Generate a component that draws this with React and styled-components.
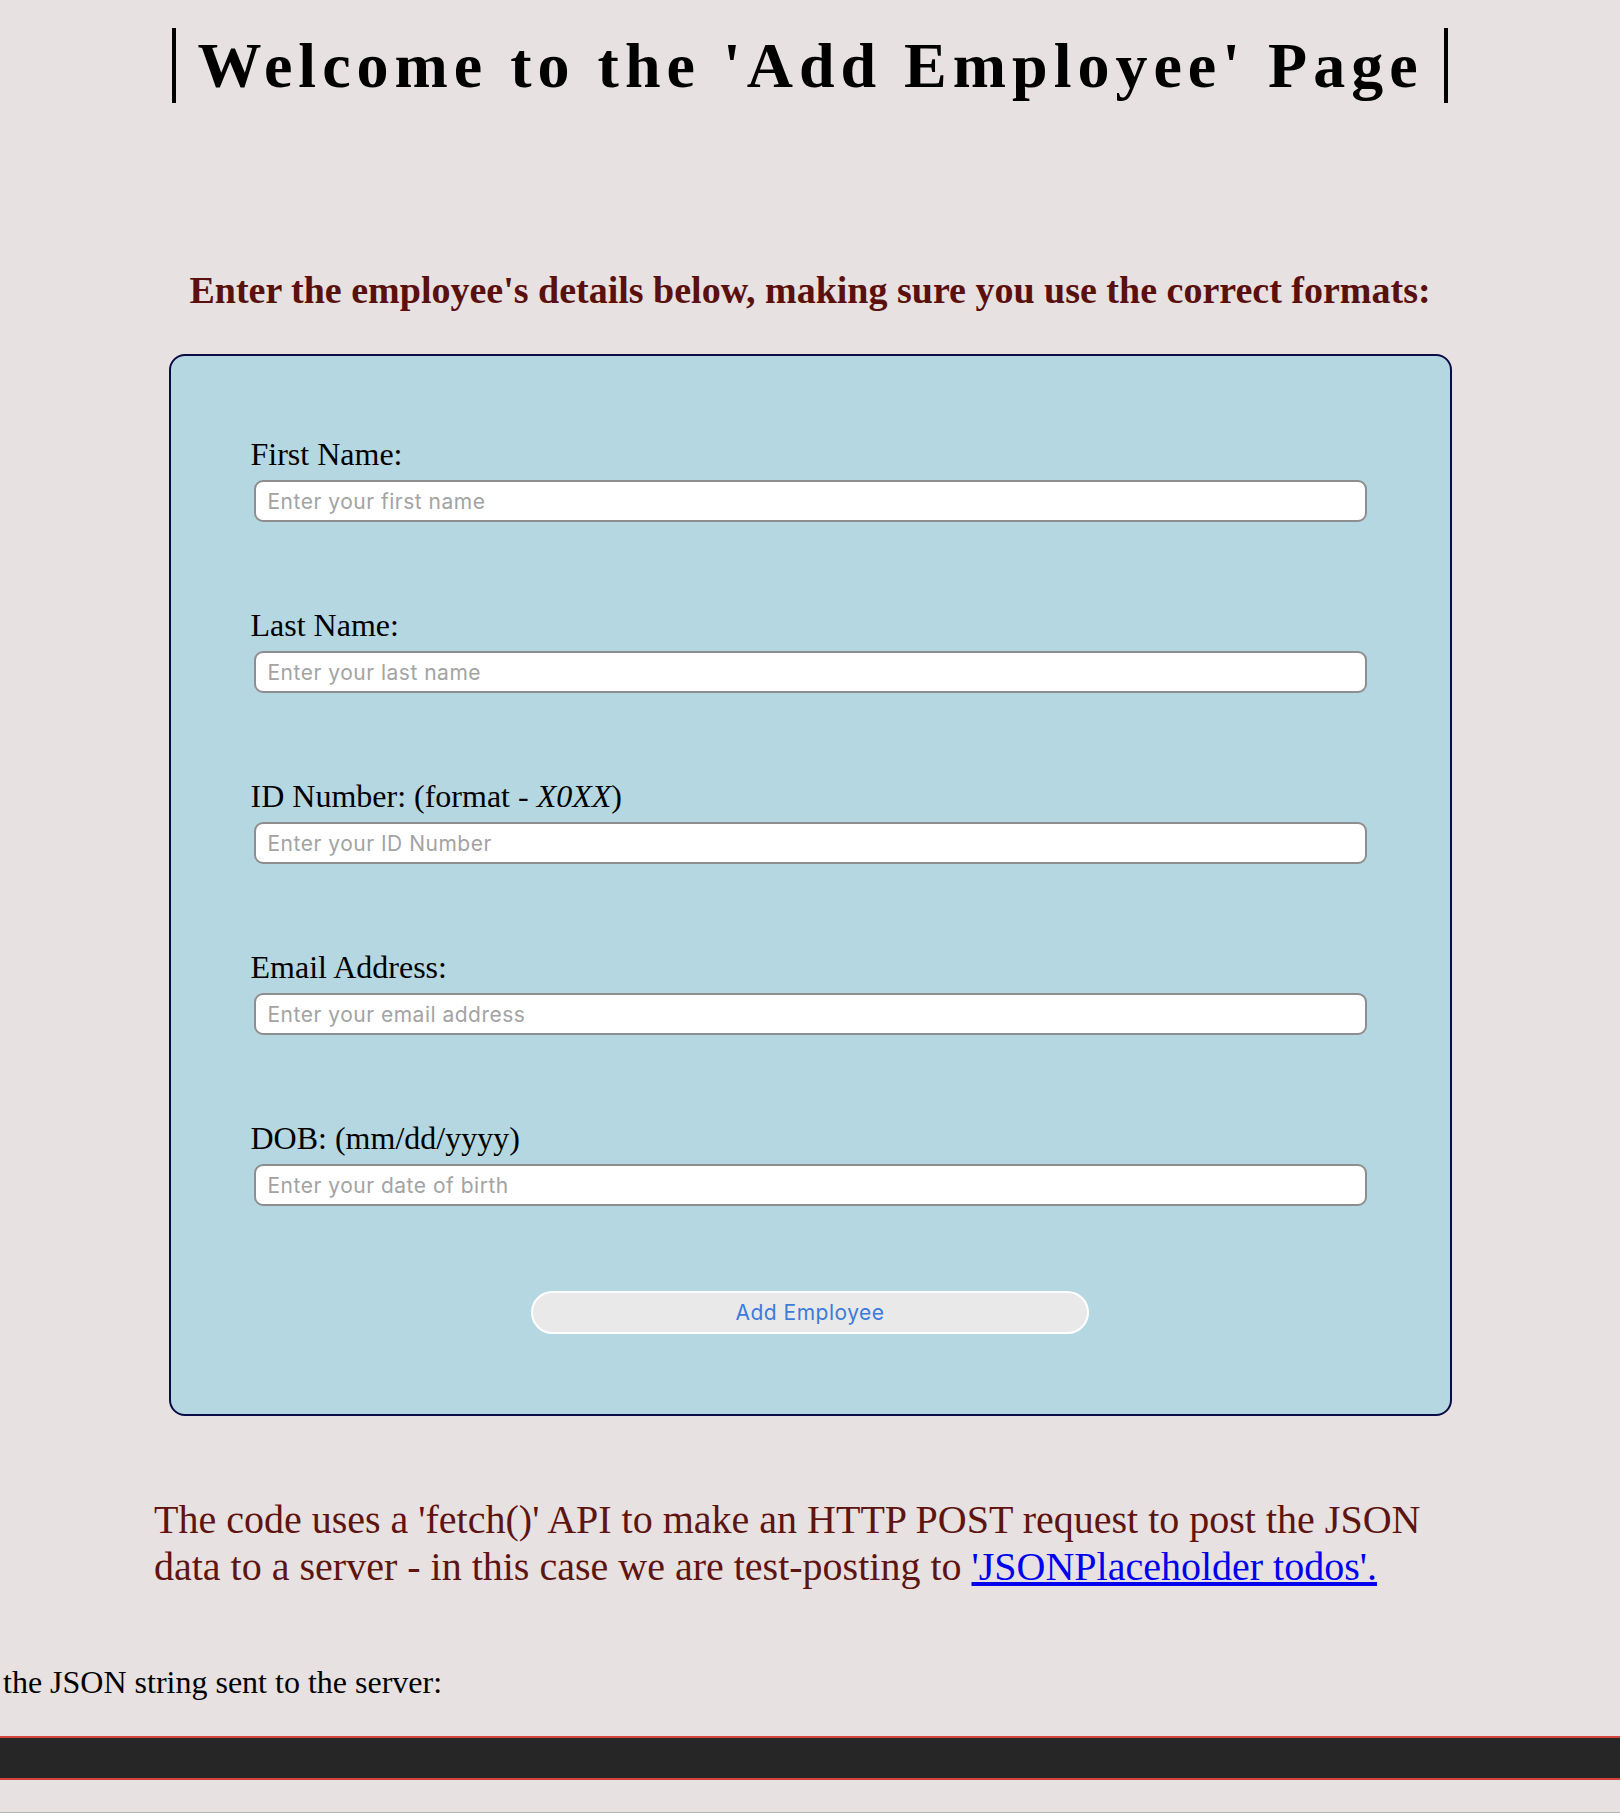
import React from "react";
import styled, { createGlobalStyle } from "styled-components";

const GlobalStyle = createGlobalStyle`
  html, body {
    margin: 0;
    padding: 0;
    background: #e7e1e1;
  }
  body {
    font-family: "Liberation Serif", "Times New Roman", serif;
  }
`;

const Page = styled.div`
  min-height: 1812px;
  border-bottom: 1px solid #b3b3b3;
  display: flex;
  flex-direction: column;
`;

const TitleRow = styled.header`
  display: flex;
  justify-content: center;
  padding-top: 28px;
`;

const Title = styled.h1`
  margin: 0;
  padding: 0 20px 0 21px;
  border-left: 4px solid #000;
  border-right: 4px solid #000;
  font-size: 64px;
  line-height: 75px;
  font-weight: 700;
  letter-spacing: 6px;
  color: #000;
`;

const Intro = styled.h2`
  margin: 166px 0 0;
  text-align: center;
  font-size: 38px;
  line-height: 42px;
  font-weight: 700;
  color: #5a100d;
`;

const FormCard = styled.form`
  box-sizing: border-box;
  width: 1283px;
  margin: 43px auto 0;
  padding: 80px;
  background: #b5d7e2;
  border: 2px solid #0b0b45;
  border-radius: 16px;
  display: flex;
  flex-direction: column;
  gap: 85px;
`;

const Field = styled.div`
  display: flex;
  flex-direction: column;
  gap: 8px;
`;

const Label = styled.label`
  font-size: 32px;
  line-height: 36px;
  color: #000;

  em {
    font-style: italic;
  }
`;

const Input = styled.input`
  box-sizing: border-box;
  height: 42px;
  margin: 0 3px;
  padding: 0 12px;
  background: #fff;
  border: 2px solid #8e8e8e;
  border-radius: 9px;
  font-family: Inter, "Noto Sans", sans-serif;
  font-size: 21px;
  letter-spacing: 0.5px;
  color: #222;
  outline: none;

  &::placeholder {
    color: #a3a3a3;
  }
`;

const SubmitButton = styled.button`
  align-self: center;
  width: 558px;
  height: 43px;
  background: #e9e9e9;
  border: 2px solid #fff;
  border-radius: 22px;
  font-family: Inter, "Noto Sans", sans-serif;
  font-size: 21px;
  letter-spacing: 0.5px;
  color: #3c7bdb;
  cursor: pointer;
`;

const Note = styled.p`
  width: 1312px;
  margin: 80px auto 0;
  font-size: 40px;
  line-height: 47px;
  color: #5e1410;

  a {
    color: #0000ee;
    text-decoration: underline;
  }
`;

const JsonLabel = styled.p`
  margin: 74px 0 0;
  padding-left: 3px;
  font-size: 32px;
  line-height: 37px;
  color: #000;
`;

const Output = styled.pre`
  margin: 35px 0 0;
  height: 40px;
  background: #262626;
  border-top: 2px solid #d4443a;
  border-bottom: 2px solid #d4443a;
`;

const fields = [
  { id: "firstName", label: "First Name:", placeholder: "Enter your first name" },
  { id: "lastName", label: "Last Name:", placeholder: "Enter your last name" },
  {
    id: "idNumber",
    label: (
      <>
        ID Number: (format - <em>X0XX</em>)
      </>
    ),
    placeholder: "Enter your ID Number",
  },
  { id: "email", label: "Email Address:", placeholder: "Enter your email address" },
  { id: "dob", label: "DOB: (mm/dd/yyyy)", placeholder: "Enter your date of birth" },
];

export default function App() {
  return (
    <Page>
      <GlobalStyle />
      <TitleRow>
        <Title>Welcome to the 'Add Employee' Page</Title>
      </TitleRow>
      <Intro>Enter the employee's details below, making sure you use the correct formats:</Intro>
      <FormCard onSubmit={(e) => e.preventDefault()}>
        {fields.map((f) => (
          <Field key={f.id}>
            <Label htmlFor={f.id}>{f.label}</Label>
            <Input id={f.id} type="text" placeholder={f.placeholder} />
          </Field>
        ))}
        <SubmitButton type="submit">Add Employee</SubmitButton>
      </FormCard>
      <Note>
        The code uses a 'fetch()' API to make an HTTP POST request to post the JSON data to a server - in this case we
        are test-posting to <a href="#todos">'JSONPlaceholder todos'.</a>
      </Note>
      <JsonLabel>the JSON string sent to the server:</JsonLabel>
      <Output />
    </Page>
  );
}
